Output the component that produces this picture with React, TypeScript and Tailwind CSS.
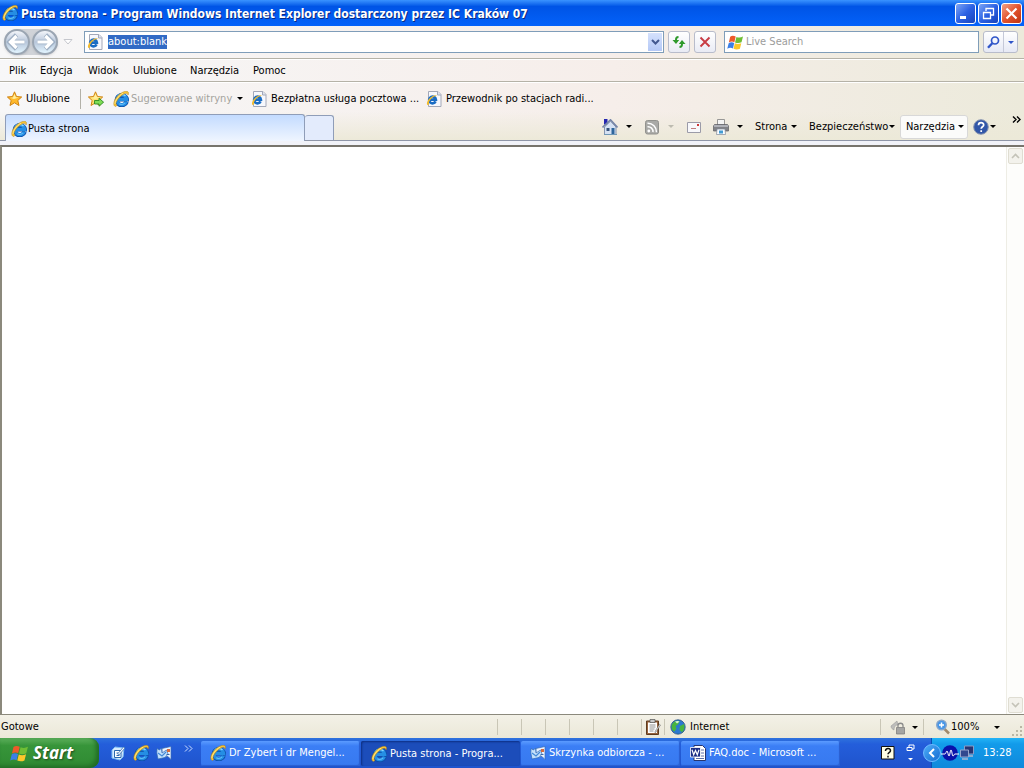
import { useEffect, useRef } from "react";
import type { ReactNode } from "react";

function IeLogo({ className = "size-4" }: { className?: string }) {
  return (
    <svg viewBox="0 0 16 16" className={className} aria-hidden="true">
      <path d="M13.700 10.800A5.100 5.100 0 1 1 13.900 8.300H5.500" fill="none" stroke="#0d4ea6" strokeWidth="4.200" />
      <path d="M13.400 10.600A4.900 4.900 0 1 1 13.700 8.300H5.500" fill="none" stroke="#258ee4" strokeWidth="3.200" />
      <path d="M4.300 6.500A5 5 0 0 1 12.500 5" fill="none" stroke="#86d6ff" strokeWidth="1.400" />
      <path d="M6.300 12.700c2 1.100 4.300.9 5.900-.8" fill="none" stroke="#5fbcf6" strokeWidth="1.100" />
      <path d="M2.200 15.500C-.9 13.600 1.500 7.500 6 3.700 9.600.6 13.900-.7 15.100 1c.6.900.4 2-.1 3-.2-1.500-1.200-2.100-3-1.500C8.700 3.600 4.300 8 3.200 11.600c-.4 1.400-.1 2.400.8 2.700-.5.600-1.200 1.100-1.800 1.200z" fill="#f9c737" stroke="#b07f14" strokeWidth=".5" />
      <path d="M2 13c0-3.200 3.500-8.200 8-10.800" fill="none" stroke="#fff0a8" strokeWidth=".7" />
    </svg>
  );
}

function PageLogo() {
  return (
    <svg viewBox="0 0 16 16" className="size-4 shrink-0" aria-hidden="true">
      <path d="M2.500.5h9.500l3 3v12h-12.500z" fill="#f7f8fd" stroke="#a3a8b8" />
      <path d="M11.500 .5V4h3.500" fill="#dfe3ee" stroke="#a3a8b8" />
      <path d="M9.600 10.400A3.400 3.400 0 1 1 9.900 8.600H4.500" fill="none" stroke="#1a6cc4" strokeWidth="2.600" />
      <path d="M1.500 14C0 12.500 1.800 8.500 4.800 6.200c2.400-1.900 5.400-2.700 6.100-1.300-1.900-.2-4.100 1-6 3.200-1.600 1.900-2.500 4-1.700 5.100-.4.500-1.100.8-1.700.8z" fill="#f2bb2c" />
    </svg>
  );
}

function Star({ plus = false }: { plus?: boolean }) {
  return (
    <svg viewBox="0 0 16 16" className="size-4 shrink-0" aria-hidden="true">
      <path d="M7.500.8l2 4.700 5.200.5-3.900 3.500 1.200 5-4.500-2.700L3 14.500l1.200-5L.4 6l5.100-.5z" fill={plus ? "#ffe070" : "#ffb92a"} stroke="#cf8312" strokeWidth="1" strokeLinejoin="round" />
      <path d="M7.500 2.800l1.300 3.400 3.200.4L7 8 3 6.800l3-.4z" fill="#fff0a0" />
      {plus && <path d="M6.500 9.500h4.500V7.200l4.600 4-4.600 4V13H6.500z" fill="#7fdc55" stroke="#2c8a22" strokeWidth=".9" />}
    </svg>
  );
}

function Caret({ color = "fill-black" }: { color?: string }) {
  return (
    <svg viewBox="0 0 6 3" className={`h-[3px] w-[6px] shrink-0 ${color}`} aria-hidden="true">
      <path d="M0 0h6L3 3z" />
    </svg>
  );
}

function WindowsFlag({ className = "size-4" }: { className?: string }) {
  return (
    <svg viewBox="0 0 18 16" className={className} aria-hidden="true">
      <path d="M3.300 1.800C5.200.5 7.100.6 9.200 1.700L7.800 7.600C5.900 6.700 4.100 6.700 1.900 7.900z" fill="#ee5a2a" />
      <path d="M10 2c2.200 1 4.500 1 7-.3L15.400 7.800c-2.300 1.100-4.600 1.100-6.900.1z" fill="#6fbe35" />
      <path d="M1.700 8.700c2-1.200 3.900-1.100 5.900-.2L6.300 14.300C4.300 13.300 2.400 13.400.2 14.600z" fill="#3c7fe6" />
      <path d="M8.300 8.900c2.200.9 4.500.9 6.900-.2l-1.500 5.900c-2.400 1.100-4.600 1-6.800.1z" fill="#fbc72b" />
    </svg>
  );
}

function HomeIcon() {
  return (
    <svg viewBox="0 0 16 16" className="size-4" aria-hidden="true">
      <path d="M2 0h3.500v5.500H2z" fill="#2424b0" />
      <path d="M2.500 8L8.500 2.200 14 8v7.500H2.500z" fill="#d5e1f3" stroke="#70809f" strokeWidth=".8" />
      <path d="M.5 8.500L8.500.8l7 7.700" fill="none" stroke="#7585a8" strokeWidth="1.600" />
      <path d="M9.500 9h3v6.500h-3z" fill="#2d659c" />
      <path d="M4.500 9h3v3h-3z" fill="#35527c" />
      <path d="M2 15.500h13" stroke="#6f97b5" />
    </svg>
  );
}

function RssIcon() {
  return (
    <svg viewBox="0 0 16 16" className="size-4" aria-hidden="true">
      <rect x="1.500" y="1.500" width="13" height="13.500" rx="2" fill="#a9a9a6" stroke="#92928e" />
      <circle cx="4.800" cy="12" r="1.400" fill="#fff" />
      <path d="M3.500 7.700a5 5 0 0 1 5.500 5.500M3.500 4.300a8.600 8.600 0 0 1 9 9" fill="none" stroke="#fff" strokeWidth="1.500" />
    </svg>
  );
}

function MailIcon() {
  return (
    <svg viewBox="0 0 16 16" className="size-4" aria-hidden="true">
      <path d="M1.500 3.500h13v10h-13z" fill="#f8f8fb" stroke="#9b9ba8" />
      <path d="M11 5h2v2h-2z" fill="#cf3838" />
      <path d="M5 9.500h5" stroke="#c07d7d" />
    </svg>
  );
}

function PrinterIcon() {
  return (
    <svg viewBox="0 0 16 16" className="size-4" aria-hidden="true">
      <path d="M4.500.5h7V6h-7z" fill="#f4f4f4" stroke="#808080" strokeWidth=".8" />
      <path d="M1.500 5.500h13l1 1.500v5h-15V7z" fill="#818287" stroke="#5c5d63" strokeWidth=".7" />
      <path d="M1 7h14" stroke="#bfc1c8" strokeWidth="1.500" />
      <path d="M4 10h8l.500 5.500h-9z" fill="#fafcff" stroke="#7f8a9a" strokeWidth=".7" />
      <path d="M6 11.500h4v3H6z" fill="#439bd2" />
    </svg>
  );
}

function MailApp({ className = "size-4" }: { className?: string }) {
  return (
    <svg viewBox="0 0 16 16" className={className} aria-hidden="true">
      <path d="M6 3.500l9-2v13l-3-3-6 .5z" fill="#eaf3ff" stroke="#3a6cb4" strokeWidth=".7" />
      <path d="M1 3.500l2.500 1.500 2-2 .5 5 4.500-3L12 9l-3 3.500L2 14 .8 8z" fill="#c4e0fb" stroke="#2f68b4" strokeWidth=".7" />
      <path d="M2 8l4 3 4-4" fill="none" stroke="#4289d8" strokeWidth="1.200" />
      <path d="M11 4h3v3h-3z" fill="#d96b3c" />
      <path d="M10.500 9.500h3" stroke="#3868aa" />
    </svg>
  );
}

function DesktopIcon() {
  return (
    <svg viewBox="0 0 16 16" className="size-4" aria-hidden="true">
      <path d="M2 5l3-3 9 1-1 9-3 3-8-2z" fill="#d6eafe" stroke="#7dbcf4" />
      <path d="M4.500 5.500h6.500v7H4.500zM6.500 8h2M6.500 10.500h3" fill="#fff" stroke="#2868af" />
      <path d="M7.500 9l6-7 1.500 1-6 7z" fill="#f3f8ff" stroke="#2d66a7" strokeWidth=".7" />
    </svg>
  );
}

function NavButton({ label, flip = false }: { label: string; flip?: boolean }) {
  return (
    <button aria-label={label} className="size-[26px] rounded-full border-2 border-[#9aa5b2] bg-linear-to-b from-[#f4f6fa] via-[#b7c6da] to-[#e3f5ff] shadow-sm">
      <svg viewBox="0 0 22 22" className={flip ? "size-full -scale-x-100" : "size-full"} aria-hidden="true">
        <path d="M10.500 4L3.500 11l7 7M4 11h14.500" fill="none" stroke="#9fb0c4" strokeWidth="4.600" />
        <path d="M10.500 5L4.500 11l6 6M5 11h13.500" fill="none" stroke="#fff" strokeWidth="3.200" />
      </svg>
    </button>
  );
}

function ToolButton({ label, children }: { label: string; children: ReactNode }) {
  return (
    <button aria-label={label} className="flex h-[22px] w-[22px] shrink-0 items-center justify-center rounded-[3px] border border-[#b8bccb] bg-linear-to-b from-white to-[#e9ebf5]">
      {children}
    </button>
  );
}

function IconMenu({ label, disabled = false, children }: { label: string; disabled?: boolean; children: ReactNode }) {
  return (
    <button aria-label={label} disabled={disabled} className="flex w-[42px] shrink-0 items-center gap-2">
      {children}
      <Caret color={disabled ? "fill-[#bdbbb0]" : "fill-black"} />
    </button>
  );
}

function WindowButton({ label, close = false, children }: { label: string; close?: boolean; children: ReactNode }) {
  return (
    <button
      aria-label={label}
      className={
        close
          ? "size-[21px] rounded-[3px] border border-white bg-linear-to-br from-[#f0a084] via-[#e2532c] to-[#bf3510]"
          : "size-[21px] rounded-[3px] border border-white bg-linear-to-br from-[#7ea4f4] via-[#2c61e4] to-[#1743bb]"
      }
    >
      <svg viewBox="0 0 19 19" className="size-full" fill="none" stroke="#fff" aria-hidden="true">
        {children}
      </svg>
    </button>
  );
}

function TaskButton({ label, active = false, icon }: { label: string; active?: boolean; icon: ReactNode }) {
  return (
    <button
      className={
        active
          ? "flex h-[25px] w-[159px] min-w-0 items-center gap-[3px] rounded-[2px] bg-[#1c4dba] pt-[2px] pl-[10px] text-left shadow-[inset_1px_1px_2px_#0d2f83]"
          : "flex h-[25px] w-[159px] min-w-0 items-center gap-[3px] rounded-[2px] bg-linear-to-b from-[#5b9bff] via-[#3b7ef5] via-20% to-[#3779f0] pl-[9px] text-left shadow-[inset_-1px_-1px_1px_#2a5ed0]"
      }
    >
      {icon}
      <span className="whitespace-nowrap">{label}</span>
    </button>
  );
}

const menus = [
  { label: "Plik", width: "w-[31px]" },
  { label: "Edycja", width: "w-[48px]" },
  { label: "Widok", width: "w-[45px]" },
  { label: "Ulubione", width: "w-[57px]" },
  { label: "Narzędzia", width: "w-[63px]" },
  { label: "Pomoc", width: "w-[40px]" },
];

const emptyPanes = [1, 2, 3, 4, 5, 6];

function TitleBar() {
  return (
    <header className="flex h-[26px] items-center bg-linear-to-b from-[#3a93ff] via-[#0054e6] via-25% to-[#0462fa] pr-[2px] pl-[2px]">
      <IeLogo />
      <h1 className="ml-[3px] flex-1 pt-px text-[12px] font-bold whitespace-nowrap text-white [text-shadow:1px_1px_0_#0a2a80]">
        Pusta strona - Program Windows Internet Explorer dostarczony przez IC Kraków 07
      </h1>
      <div className="flex gap-[2px]">
        <WindowButton label="Minimalizuj">
          <path d="M4 13.500h6" strokeWidth="3" />
        </WindowButton>
        <WindowButton label="Przywróć">
          <path d="M7 7V4.500h7.500V11H12M7 4.500h7.500M4.500 8.500h7v6h-7zM4.500 8.500h7" strokeWidth="1.300" />
        </WindowButton>
        <WindowButton label="Zamknij" close>
          <path d="M4.500 4.500l10 10M14.500 4.500l-10 10" strokeWidth="2.200" />
        </WindowButton>
      </div>
    </header>
  );
}

function AddressRow() {
  const address = useRef<HTMLInputElement>(null);
  useEffect(() => {
    address.current?.focus();
    address.current?.select();
  }, []);
  return (
    <div className="flex h-[33px] items-center border-b border-[#b5b2a7] pr-[6px] pl-[4px]">
      <div className="flex shrink-0 gap-[2px] rounded-full bg-[#d0d3d8]">
        <NavButton label="Wstecz" />
        <NavButton label="Dalej" flip />
      </div>
      <button aria-label="Ostatnie strony" className="ml-[5px] w-[10px] shrink-0">
        <svg viewBox="0 0 10 6" className="h-[6px] w-[10px]" aria-hidden="true">
          <path d="M1 .5h8L5 5z" fill="#fff" stroke="#c5c7cd" />
        </svg>
      </button>
      <div className="ml-[11px] flex h-[22px] min-w-0 flex-1 items-center border border-[#7f9db9] bg-white pl-[2px]">
        <PageLogo />
        <input
          ref={address}
          aria-label="Adres"
          defaultValue="about:blank"
          className="ml-[5px] min-w-0 flex-1 bg-transparent outline-none selection:bg-[#316ac5] selection:text-white"
        />
        <button aria-label="Pokaż adresy" className="mr-px flex h-[18px] w-[14px] items-center justify-center bg-linear-to-b from-[#d5e1fc] to-[#b4c8f6]">
          <svg viewBox="0 0 9 6" className="h-[6px] w-[9px]" fill="none" stroke="#42588f" strokeWidth="2" aria-hidden="true">
            <path d="M1 1l3.500 3.500L8 1" />
          </svg>
        </button>
      </div>
      <div className="ml-[4px] flex gap-[4px]">
        <ToolButton label="Odśwież">
          <svg viewBox="0 0 16 16" className="size-4 shrink-0" fill="#2f9a2c" aria-hidden="true">
            <path d="M4 6c0-2.500 1-4 3.500-4v2C6.300 4 6 4.700 6 6h2.200L5 10 1.500 6z" />
            <path d="M12 10c0 2.500-1 4-3.500 4v-2c1.200 0 1.500-.7 1.500-2H7.800L11 6l3.500 4z" />
          </svg>
        </ToolButton>
        <ToolButton label="Zatrzymaj">
          <svg viewBox="0 0 12 12" className="size-3" fill="none" stroke="#c83c44" strokeWidth="1.900" aria-hidden="true">
            <path d="M1.500 1.500l9 9M10.500 1.500l-9 9" />
          </svg>
        </ToolButton>
      </div>
      <div className="ml-[8px] flex h-[22px] w-[255px] items-center border border-[#7f9db9] bg-white pl-[2px]">
        <WindowsFlag className="h-[15px] w-[17px]" />
        <input aria-label="Wyszukaj" placeholder="Live Search" className="ml-[2px] min-w-0 flex-1 bg-transparent outline-none placeholder:text-[#9c9c9c]" />
      </div>
      <div className="ml-[4px] flex h-[22px] w-[35px] rounded-[3px] border border-[#b8bccb] bg-linear-to-b from-white to-[#e6e9f5]">
        <button aria-label="Szukaj" className="flex flex-1 items-center justify-center border-r border-[#c5c9d8]">
          <svg viewBox="0 0 13 13" className="size-[13px]" fill="none" stroke="#2f55c8" aria-hidden="true">
            <circle cx="8" cy="4.500" r="3.500" strokeWidth="1.700" />
            <path d="M5.300 7.200L1 11.800" strokeWidth="2.400" />
          </svg>
        </button>
        <button aria-label="Opcje wyszukiwania" className="flex w-[13px] items-center justify-center">
          <Caret color="fill-[#2f55c8]" />
        </button>
      </div>
    </div>
  );
}

function FavoritesBar() {
  return (
    <div className="flex h-[31px] items-center border-t border-white pt-px pl-[7px] whitespace-nowrap">
      <button className="flex w-[73px] items-center gap-[3px]">
        <Star />
        Ulubione
      </button>
      <span className="h-5 w-px bg-[#b3b1a8]" />
      <button aria-label="Dodaj do ulubionych" className="ml-[7px]">
        <Star plus />
      </button>
      <button className="ml-[9px] flex w-[130px] items-center text-[#a5a49e]">
        <IeLogo className="size-4 shrink-0" />
        <span className="ml-[2px] flex-1 text-left">Sugerowane witryny</span>
        <Caret />
      </button>
      <a href="#poczta" className="ml-[8px] flex w-[175px] items-center gap-[4px]">
        <PageLogo />
        Bezpłatna usługa pocztowa ...
      </a>
      <a href="#radio" className="flex items-center gap-[4px]">
        <PageLogo />
        Przewodnik po stacjach radi...
      </a>
    </div>
  );
}

function TabRow() {
  return (
    <div className="flex h-[28px] border-b border-[#8f96a8]">
      <div role="tablist" className="flex items-end pl-[5px]">
        <button role="tab" aria-selected="true" className="-mb-px flex h-[27px] w-[300px] items-center gap-px rounded-t-[3px] border border-b-0 border-[#8f9db8] bg-linear-to-b from-[#c3dbff] to-[#eff5ff] pt-px pl-[5px]">
          <IeLogo />
          Pusta strona
        </button>
        <button role="tab" aria-selected="false" aria-label="Nowa karta" className="h-[25px] w-[29px] rounded-t-[3px] border border-b-0 border-l-0 border-[#8f9db8] bg-[#e3ebfc]" />
      </div>
      <div className="flex flex-1 items-center justify-end whitespace-nowrap">
        <IconMenu label="Strona główna">
          <HomeIcon />
        </IconMenu>
        <IconMenu label="Kanały" disabled>
          <RssIcon />
        </IconMenu>
        <button aria-label="Poczta" className="w-[27px]">
          <MailIcon />
        </button>
        <IconMenu label="Drukuj">
          <PrinterIcon />
        </IconMenu>
        <button className="flex w-[54px] items-center gap-[4px]">
          Strona
          <Caret />
        </button>
        <button className="flex w-[91px] items-center gap-px">
          Bezpieczeństwo
          <Caret />
        </button>
        <button className="flex h-[24px] w-[68px] items-center justify-end gap-[3px] rounded-[3px] border border-[#d8d8d8] bg-[#fbfbfa] pr-[3px]">
          Narzędzia
          <Caret />
        </button>
        <button aria-label="Pomoc" className="ml-[5px] flex w-[24px] items-center gap-px">
          <svg viewBox="0 0 16 16" className="size-4" aria-hidden="true">
            <circle cx="8" cy="8" r="7.300" fill="#3156a8" stroke="#8a96b0" />
            <path d="M5.500 6.200c0-3.400 5.200-3.200 5.200-.3 0 1.900-2.500 1.900-2.500 3.900M8.200 11.200v1.800" fill="none" stroke="#fff" strokeWidth="1.700" />
          </svg>
          <Caret />
        </button>
        <button aria-label="Więcej poleceń" className="mt-[3px] mr-[3px] ml-[15px] self-start">
          <svg viewBox="0 0 9 7" className="h-[7px] w-[9px]" fill="none" stroke="#000" strokeWidth="1.400" aria-hidden="true">
            <path d="M1 .5l3 3-3 3M5 .5l3 3-3 3" />
          </svg>
        </button>
      </div>
    </div>
  );
}

function ScrollArrow({ down = false }: { down?: boolean }) {
  return (
    <button
      disabled
      aria-label={down ? "Przewiń w dół" : "Przewiń w górę"}
      className="flex h-[16px] w-[15px] items-center justify-center rounded-[2px] border border-[#dfddd2] bg-[#f3f2ec]"
    >
      <svg viewBox="0 0 9 6" className={down ? "h-[6px] w-[9px] rotate-180" : "h-[6px] w-[9px]"} fill="none" stroke="#c4c3b8" strokeWidth="1.600" aria-hidden="true">
        <path d="M1 5l3.500-3.500L8 5" />
      </svg>
    </button>
  );
}

function StatusBar() {
  return (
    <footer className="flex h-[23px] items-center bg-linear-to-b from-[#f3f1e7] to-[#ebe8d8] pt-px">
      <span className="ml-px flex-1">Gotowe</span>
      {emptyPanes.map((pane) => (
        <span key={pane} className="h-4 w-[24px] border-l border-[#c9c6b6]" />
      ))}
      <span className="flex h-4 w-[24px] items-center justify-center border-x border-[#c9c6b6]">
        <svg viewBox="0 0 16 16" className="size-4 shrink-0" aria-hidden="true">
          <path d="M1.500 2h12v13.500h-12z" fill="#98643c" stroke="#5e3b20" />
          <path d="M3 3.500h9v10.500H3z" fill="#fff" />
          <path d="M4.500 6h6M4.500 8h6M4.500 10h5M4.500 12h4" stroke="#777" strokeWidth=".8" />
          <path d="M5 .5h5v3H5z" fill="#c9c9c9" stroke="#555" strokeWidth=".7" />
          <path d="M15.500 6l-4.500 7-1 .7.200-1.500 4.300-7z" fill="#eee" stroke="#555" strokeWidth=".5" />
        </svg>
      </span>
      <span className="flex w-[215px] items-center gap-[4px] pl-[5px]">
        <svg viewBox="0 0 16 16" className="size-4" aria-hidden="true">
          <circle cx="8" cy="8" r="7.200" fill="#2c79cf" stroke="#27507f" strokeWidth=".8" />
          <path d="M2 5.500C4 1.500 8 1 9.500 2.500L8 5.500 5.500 7l1 2.500-2 3C2 11.500 1 8.500 2 5.500zM10 7l4-2c1 3 .5 6-2 8.200L9.500 11z" fill="#48b53e" />
          <path d="M5 2.500c2-1 4-.5 4.500.3L7 4.500z" fill="#d4f3d8" />
        </svg>
        Internet
      </span>
      <button aria-label="Tryb chroniony" className="flex h-4 w-[43px] items-center gap-[6px] border-l border-[#c9c6b6] pl-[9px]">
        <svg viewBox="0 0 16 16" className="size-4" aria-hidden="true">
          <path d="M1 7l6-5 1 4c-3 0-4 2-4 5C2 10 1 9 1 7z" fill="#bdbdbb" stroke="#929292" strokeWidth=".5" />
          <path d="M6.500 8.500h8v6.500h-8z" fill="#a5a5a3" stroke="#777" strokeWidth=".7" />
          <path d="M8 8.500V6.500c0-3 5-3 5 0v2" fill="none" stroke="#8b8b8b" strokeWidth="1.300" />
        </svg>
        <Caret />
      </button>
      <button className="flex h-4 w-[89px] items-center border-l border-[#c9c6b6] pl-[11px]">
        <svg viewBox="0 0 16 16" className="size-4" aria-hidden="true">
          <path d="M9 9.500l5 5" stroke="#a28b6b" strokeWidth="2.500" />
          <circle cx="6.500" cy="6" r="4.800" fill="#4696e8" stroke="#88a6cb" strokeWidth="1.400" />
          <path d="M6.500 3.500v5M4 6h5" stroke="#fff" strokeWidth="1.500" />
        </svg>
        <span className="flex-1 text-left">100%</span>
        <span className="mr-[12px]">
          <Caret />
        </span>
      </button>
      <svg viewBox="0 0 12 12" className="h-3 w-3 self-end" fill="#bab7a5" aria-hidden="true">
        <path d="M8 0h2v2H8zM4 4h2v2H4zM8 4h2v2H8zM0 8h2v2H0zM4 8h2v2H4zM8 8h2v2H8z" />
      </svg>
    </footer>
  );
}

function Taskbar() {
  return (
    <nav aria-label="Pasek zadań" className="flex h-[30px] items-center bg-linear-to-b from-[#2f72dd] via-[#245edb] via-20% to-[#1f53cc] text-white">
      <button className="flex h-full w-[99px] items-center gap-[4px] rounded-r-[9px] bg-linear-to-b from-[#5cb05c] via-[#37953a] via-25% to-[#2f8a32] pl-[10px] font-['Open_Sans',sans-serif] text-[17px] font-bold italic shadow-[inset_-3px_-2px_4px_#216b25] [text-shadow:1px_1px_2px_#1d4a1d]">
        <WindowsFlag className="h-[17px] w-[19px]" />
        Start
      </button>
      <div className="ml-[11px] flex w-[91px] items-center gap-[7px]">
        <button aria-label="Pokaż pulpit">
          <DesktopIcon />
        </button>
        <button aria-label="Internet Explorer">
          <IeLogo />
        </button>
        <button aria-label="Outlook Express">
          <MailApp />
        </button>
        <button aria-label="Więcej" className="ml-[5px] self-start">
          <svg viewBox="0 0 9 7" className="h-[7px] w-[9px]" fill="none" stroke="#cfe0ff" aria-hidden="true">
            <path d="M1 .5l3 3-3 3M5 .5l3 3-3 3" />
          </svg>
        </button>
      </div>
      <div className="flex flex-1 gap-px">
        <TaskButton label="Dr Zybert i dr Mengel..." icon={<IeLogo className="size-4 shrink-0" />} />
        <TaskButton label="Pusta strona - Progra..." active icon={<IeLogo className="size-4 shrink-0" />} />
        <TaskButton label="Skrzynka odbiorcza - ..." icon={<MailApp className="size-4 shrink-0" />} />
        <TaskButton
          label="FAQ.doc - Microsoft ..."
          icon={
            <svg viewBox="0 0 16 16" className="size-4 shrink-0" aria-hidden="true">
              <path d="M4 .5h8.500l3 3v12H4z" fill="#fff" stroke="#27356e" />
              <path d="M11 5h3M11 8h3M11 11h3M6 13.500h8" stroke="#5e6fa8" />
              <path d="M.5 2.500h10v9.500H.5z" fill="#1c2f86" stroke="#fff" strokeWidth=".8" />
              <path d="M2 4.800l1.700 5L5.500 5.500l1.800 4.300L9 4.800" fill="none" stroke="#fff" strokeWidth="1.200" />
            </svg>
          }
        />
      </div>
      <button aria-label="Pomoc językowa" className="mr-[11px]">
        <svg viewBox="0 0 14 14" className="size-[14px]" aria-hidden="true">
          <path d="M.5.5h12.500v12.500H.5z" fill="#ffffe6" stroke="#111" />
          <path d="M4.500 5c0-3.300 5-3 5-.2 0 1.700-2.500 1.500-2.500 3.500M7 9.700v1.800" fill="none" stroke="#111" strokeWidth="1.500" />
        </svg>
      </button>
      <button aria-label="Pasek języka" className="mr-[16px]">
        <svg viewBox="0 0 9 18" className="h-[18px] w-[9px]" aria-hidden="true">
          <path d="M3 3V1h5v4H6M1 3.500h5v3H1z" fill="none" stroke="#fff" />
          <path d="M2 14h5l-2.500 2.500z" fill="#fff" />
        </svg>
      </button>
      <div className="flex h-full w-[93px] shrink-0 items-center border-l border-[#0a4fb5] bg-linear-to-b from-[#22b3f6] via-[#129bea] via-20% to-[#1089db]">
        <button aria-label="Pokaż ukryte ikony" className="-ml-[9px] flex size-[18px] items-center justify-center rounded-full border border-[#70baff] bg-linear-to-br from-[#4cacf7] to-[#136cd2]">
          <svg viewBox="0 0 8 10" className="h-[10px] w-2" fill="none" stroke="#fff" strokeWidth="2" aria-hidden="true">
            <path d="M6 1L2 5l4 4" />
          </svg>
        </button>
        <svg viewBox="0 0 18 16" className="h-4 w-[18px]" aria-hidden="true">
          <circle cx="9" cy="8" r="7.800" fill="#0911ab" />
          <path d="M0 9h4c1 0 1-3 2-3s1 5 2 5 1-6 2-6 1 6 2 6 1-2 2-2h4" fill="none" stroke="#fff" />
        </svg>
        <svg viewBox="0 0 16 16" className="size-4" aria-hidden="true">
          <path d="M5.500 1h9v8h-9z" fill="#263573" stroke="#8a9cc6" />
          <path d="M1.500 5h8v7h-8z" fill="#32488f" stroke="#98a5cd" />
          <path d="M3 14h6M10 11h4" stroke="#abb6d1" strokeWidth="1.500" />
        </svg>
        <time className="ml-[8px]">13:28</time>
      </div>
    </nav>
  );
}

export default function App() {
  return (
    <div className="flex min-h-screen flex-col bg-[#ece9d8] font-['DejaVu_Sans_Condensed','DejaVu_Sans',sans-serif] text-[11px] leading-[14px] text-black">
      <TitleBar />
      <div className="bg-linear-to-r from-[#f7f7f8] via-[#f6eeea] via-60% to-[#eceadb]">
        <AddressRow />
        <nav aria-label="Menu" className="flex h-[23px] items-center border-y border-t-white border-b-[#b5b2a7] pt-px pl-[9px]">
          {menus.map((menu) => (
            <button key={menu.label} className={`shrink-0 text-left whitespace-nowrap ${menu.width}`}>
              {menu.label}
            </button>
          ))}
        </nav>
        <div className="bg-linear-to-b from-transparent via-transparent to-[#ece9d8]">
          <FavoritesBar />
          <TabRow />
        </div>
      </div>
      <div className="h-[4px] bg-[#f1f2f8]" />
      <main className="flex flex-1 border-t-2 border-b border-l-2 border-t-[#77746c] border-b-[#8b897c] border-l-[#8b897c] bg-white">
        <div className="flex-1" />
        <div className="flex w-[18px] flex-col items-center justify-between border-l border-[#eeede5] bg-[#fdfdfb] py-px">
          <ScrollArrow />
          <ScrollArrow down />
        </div>
      </main>
      <StatusBar />
      <Taskbar />
    </div>
  );
}
